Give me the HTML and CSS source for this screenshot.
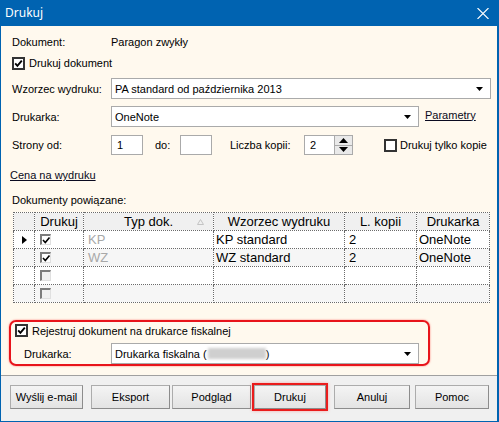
FILE: index.html
```html
<!DOCTYPE html>
<html lang="pl">
<head>
<meta charset="utf-8">
<title>Drukuj</title>
<link rel="stylesheet" href="styles.css">
</head>
<body>
<div class="window">
  <div class="titlebar">
    <span class="title">Drukuj</span>
    <svg class="close" width="12" height="11" viewBox="0 0 12 11"><path d="M0.5 0 L11.5 11 M11.5 0 L0.5 11" stroke="#fff" stroke-width="1.1" fill="none"/></svg>
  </div>

  <div class="content">
    <div class="row r-doc"><span class="label">Dokument:</span><span>Paragon zwykły</span></div>

    <div class="row r-print">
      <svg class="cb" width="13" height="13" viewBox="0 0 13 13"><rect x="1" y="1" width="11" height="11" fill="#fff" stroke="#333" stroke-width="2"/><path d="M3.2 6.4 L5.4 8.8 L9.8 3.6" stroke="#000" stroke-width="1.9" fill="none"/></svg>
      <span>Drukuj dokument</span>
    </div>

    <div class="row r-tpl">
      <span class="label">Wzorzec wydruku:</span>
      <div class="combo combo-wide"><span>PA standard od października 2013</span><svg width="7" height="4" viewBox="0 0 7 4"><path d="M0 0 H7 L3.5 4 Z" fill="#000"/></svg></div>
    </div>

    <div class="row r-printer">
      <span class="label">Drukarka:</span>
      <div class="combo combo-mid"><span>OneNote</span><svg width="7" height="4" viewBox="0 0 7 4"><path d="M0 0 H7 L3.5 4 Z" fill="#000"/></svg></div>
      <span class="link params">Parametry</span>
    </div>

    <div class="row r-pages">
      <span class="label">Strony od:</span>
      <div class="input">1</div>
      <span class="to">do:</span>
      <div class="input"></div>
      <span class="copies">Liczba kopii:</span>
      <div class="spin">
        <div class="spin-val">2</div>
        <div class="spin-btns">
          <div class="spin-up"><svg width="9" height="5" viewBox="0 0 9 5"><path d="M0 5 H9 L4.5 0 Z" fill="#000"/></svg></div>
          <div class="spin-down"><svg width="9" height="5" viewBox="0 0 9 5"><path d="M0 0 H9 L4.5 5 Z" fill="#000"/></svg></div>
        </div>
      </div>
      <svg class="cb cb-copies" width="13" height="13" viewBox="0 0 13 13"><rect x="1" y="1" width="11" height="11" fill="#fff" stroke="#333" stroke-width="2"/></svg>
      <span>Drukuj tylko kopie</span>
    </div>

    <div class="row r-price"><span class="link price">Cena na wydruku</span></div>

    <div class="row r-linked"><span>Dokumenty powiązane:</span></div>

    <table class="grid">
      <colgroup>
        <col class="c-ind"><col class="c-chk"><col class="c-type"><col class="c-tpl"><col class="c-cnt"><col class="c-prn">
      </colgroup>
      <thead>
        <tr><th></th><th>Drukuj</th><th class="th-sort">Typ dok.<svg class="sort" width="7" height="6" viewBox="0 0 7 6"><path d="M0.5 5.5 H6.5 L3.5 0.5 Z" fill="none" stroke="#c4c4c4" stroke-width="1"/></svg></th><th>Wzorzec wydruku</th><th>L. kopii</th><th>Drukarka</th></tr>
      </thead>
      <tbody>
        <tr class="odd">
          <td><span class="ind"></span></td>
          <td><span class="tcb"><svg width="9" height="9" viewBox="0 0 9 9"><path d="M1 4 L3.3 6.5 L7.5 1.5" stroke="#000" stroke-width="1.6" fill="none"/></svg></span></td>
          <td class="dim">KP</td><td>KP standard</td><td class="num">2</td><td>OneNote</td>
        </tr>
        <tr class="even">
          <td></td>
          <td><span class="tcb"><svg width="9" height="9" viewBox="0 0 9 9"><path d="M1 4 L3.3 6.5 L7.5 1.5" stroke="#000" stroke-width="1.6" fill="none"/></svg></span></td>
          <td class="dim">WZ</td><td>WZ standard</td><td class="num">2</td><td>OneNote</td>
        </tr>
        <tr class="odd">
          <td></td><td><span class="tcb empty"></span></td><td></td><td></td><td></td><td></td>
        </tr>
        <tr class="even">
          <td></td><td><span class="tcb empty"></span></td><td></td><td></td><td></td><td></td>
        </tr>
      </tbody>
    </table>

    <div class="fiscal">
      <div class="f-row1">
        <svg class="cb" width="13" height="13" viewBox="0 0 13 13"><rect x="1" y="1" width="11" height="11" fill="#fff" stroke="#333" stroke-width="2"/><path d="M3.2 6.4 L5.4 8.8 L9.8 3.6" stroke="#000" stroke-width="1.9" fill="none"/></svg>
        <span>Rejestruj dokument na drukarce fiskalnej</span>
      </div>
      <div class="f-row2">
        <span class="f-label">Drukarka:</span>
        <div class="combo combo-mid"><span class="f-name">Drukarka fiskalna (<span class="blur"></span>)</span><svg width="7" height="4" viewBox="0 0 7 4"><path d="M0 0 H7 L3.5 4 Z" fill="#000"/></svg></div>
      </div>
    </div>
  </div>

  <div class="footer">
    <button class="btn b-mail">Wyślij e-mail</button>
    <button class="btn b-export">Eksport</button>
    <button class="btn b-preview">Podgląd</button>
    <button class="btn b-print">Drukuj</button>
    <button class="btn b-cancel">Anuluj</button>
    <button class="btn b-help">Pomoc</button>
  </div>
</div>
</body>
</html>
```

FILE: styles.css
```css
* { box-sizing: border-box; }
html, body { margin: 0; padding: 0; }
body {
  width: 499px;
  height: 422px;
  overflow: hidden;
  font-family: "Liberation Sans", Arial, sans-serif;
  font-size: 11px;
  color: #000;
  background: #fff;
}
.window {
  width: 499px;
  height: 422px;
  background: #0063b1;
  padding: 0 2px 1px 1px;
  display: flex;
  flex-direction: column;
}
.titlebar {
  height: 26px;
  flex: none;
  display: flex;
  align-items: center;
  justify-content: space-between;
  padding: 0 8px 1px 4px;
  color: #fff;
  font-family: "Noto Sans", "Liberation Sans", sans-serif;
  font-size: 12px;
}
.close { display: block; margin-top: 1px; }

.content {
  height: 349px;
  flex: none;
  background: #fff9ee;
  padding: 8px 0 0 11px;
}
.row { display: flex; align-items: center; }
.label { width: 99px; flex: none; }
.r-doc { height: 16px; }
.r-print { height: 16px; margin-top: 5px; }
.r-print .cb { margin-right: 4px; margin-left: 0; }
.cb { display: block; flex: none; }
.r-tpl { margin-top: 7px; }
.r-printer { margin-top: 7px; }
.r-pages { margin-top: 8px; }
.r-price { margin-top: 13px; height: 14px; }
.r-linked { margin-top: 11px; height: 14px; }

.combo {
  height: 21px;
  border: 1px solid #aaaaaa;
  background: #fff;
  display: flex;
  align-items: center;
  justify-content: space-between;
  padding: 0 7px 0 3px;
  flex: none;
}
.combo svg { display: block; flex: none; }
.combo-wide { width: 380px; }
.combo-mid { width: 308px; }

.link { text-decoration: underline; color: #0a0a20; }
.params { margin-left: 6px; margin-top: -4px; }
.price { margin-left: -2px; }

.input {
  width: 32px;
  height: 20px;
  border: 1px solid #aaaaaa;
  background: #fff;
  padding-left: 5px;
  line-height: 18px;
  flex: none;
}
.to { width: 25px; margin-left: 12px; flex: none; }
.copies { width: 74px; margin-left: 18px; flex: none; }
.spin {
  width: 49px;
  height: 20px;
  border: 1px solid #aaaaaa;
  background: #fff;
  display: flex;
  flex: none;
}
.spin-val { flex: 1; padding-left: 5px; line-height: 18px; }
.spin-btns {
  width: 18px;
  display: flex;
  flex-direction: column;
  border-left: 1px solid #aaaaaa;
}
.spin-up, .spin-down {
  flex: 1;
  background: #e9e9e9;
  display: flex;
  align-items: center;
  justify-content: center;
}
.spin-up { border-bottom: 1px solid #aaaaaa; }
.spin-up svg, .spin-down svg { display: block; }
.cb-copies { margin-left: 31px; margin-right: 3px; }

.grid {
  margin-top: 5px;
  margin-left: 1px;
  width: 476px;
  border-collapse: collapse;
  table-layout: fixed;
  font-size: 13px;
  background: #fff;
}
.c-ind { width: 21px; }
.c-chk { width: 49px; }
.c-type { width: 130px; }
.c-tpl { width: 131px; }
.c-cnt { width: 72px; }
.c-prn { width: 73px; }
.grid th, .grid td {
  border: 1px dotted #6a6a6a;
  height: 18px;
  padding: 0 0 0 2px;
  line-height: 16px;
  white-space: nowrap;
  overflow: hidden;
  text-align: left;
  font-weight: normal;
  vertical-align: middle;
}
.grid th { background: #f0f0f0; text-align: center; padding: 0; }
.th-sort { position: relative; }
.sort { position: absolute; right: 9px; top: 6px; }
.grid tr.even td { background: #f6f6f6; }
.grid td.dim { color: #a8a8a8; padding-left: 4px; }
.grid td.num { padding-left: 4px; }
.ind {
  display: block;
  width: 0;
  height: 0;
  margin-left: 6px;
  border-left: 5px solid #000;
  border-top: 4.5px solid transparent;
  border-bottom: 4.5px solid transparent;
}
.tcb {
  display: block;
  width: 11px;
  height: 11px;
  margin-left: 3px;
  border-top: 2px solid #7c7c7c;
  border-left: 2px solid #7c7c7c;
  border-right: 1px solid #e0e0e0;
  border-bottom: 1px solid #e0e0e0;
  background: #fff;
  position: relative;
}
.tcb svg { display: block; position: absolute; left: 0; top: 0; }
.tcb.empty { background: #f0f0f0; }

.fiscal {
  margin: 17px 0 0 -3px;
  width: 421px;
  height: 46px;
  border: 2px solid #e8141b;
  border-radius: 7px;
  box-shadow: 0 0 2px rgba(255, 0, 0, 0.55);
  padding-left: 4px;
}
.f-row1 { height: 17px; display: flex; align-items: center; gap: 4px; }
.f-row2 { margin-top: 4px; display: flex; align-items: center; }
.f-label { width: 87px; margin-left: 9px; flex: none; }
.f-name { display: flex; align-items: center; }
.blur {
  display: inline-block;
  width: 58px;
  height: 11px;
  margin-left: 1px;
  background: #cfcfcf;
  filter: blur(1.5px);
}

.footer {
  height: 46px;
  flex: none;
  border-top: 1px solid #a0a0a0;
  background: #f0f0f0;
  padding: 9px 0 0 9px;
  display: flex;
  align-items: flex-start;
}
.btn {
  height: 24px;
  margin: 0;
  padding: 0;
  font-family: "Liberation Sans", Arial, sans-serif;
  font-size: 11px;
  color: #000;
  border: 1px solid #acacac;
  border-right-color: #8c8c8c;
  border-bottom-color: #8c8c8c;
  background: linear-gradient(#f4f4f4, #e3e3e3);
  flex: none;
}
.b-mail { width: 73px; }
.b-export { width: 79px; margin-left: 8px; }
.b-preview { width: 79px; margin-left: 2px; }
.b-print {
  width: 72px;
  margin-left: 3px;
  outline: 2px solid #ea1c1c;
  box-shadow: 0 0 3px 2px rgba(255, 40, 40, 0.35);
}
.b-cancel { width: 76px; margin-left: 8px; }
.b-help { width: 74px; margin-left: 5px; }
```
